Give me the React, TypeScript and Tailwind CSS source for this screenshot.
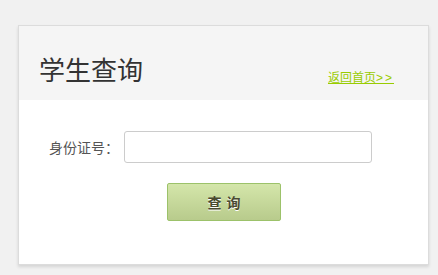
import React, { useState } from "react";

export default function App() {
  const [idNo, setIdNo] = useState("");

  return (
    <div className="min-h-screen w-[438px] h-[275px] bg-[#f1f1f1] pt-[25px] pl-[18px]" style={{ fontFamily: '"Noto Sans CJK SC", "Liberation Sans", sans-serif' }}>
      <div className="w-[411px] h-[240px] bg-white border border-[#dcdcdc] shadow-[0_2px_3px_rgba(0,0,0,0.12)]">
        {/* header */}
        <div className="h-[74px] bg-[#f5f5f5] flex items-end justify-between pl-[20px] pr-[34px] pb-[16px]">
          <h2 className="text-[26px] leading-[30px] text-[#333] font-normal">学生查询</h2>
          <a href="#" className="text-[12px] leading-[14px] text-[#99cc00] underline -mb-[1px]">
            返回首页<span className="tracking-[2px]" style={{ fontFamily: '"Liberation Sans", sans-serif' }}>&gt;&gt;</span>
          </a>
        </div>

        {/* body */}
        <form className="pt-[31px]" onSubmit={(e) => e.preventDefault()}>
          <div className="flex items-center">
            <label className="w-[105px] text-right text-[14px] text-[#555] pr-[5px]">身份证号：</label>
            <input
              type="text"
              value={idNo}
              onChange={(e) => setIdNo(e.target.value)}
              className="w-[248px] h-[32px] border border-[#cccccc] rounded-[3px] px-2 text-[13px] outline-none"
            />
          </div>
          <div className="flex pl-[148px] pt-[20px]">
            <button
              type="submit"
              className="w-[114px] h-[38px] rounded-[2px] border border-[#9cc26a] bg-gradient-to-b from-[#d4e6aa] to-[#b8cb8c] text-[14px] font-bold text-[#4a4a30] tracking-[5px] pl-[5px] [text-shadow:0_1px_0_#fff]"
            >
              查询
            </button>
          </div>
        </form>
      </div>
    </div>
  );
}
